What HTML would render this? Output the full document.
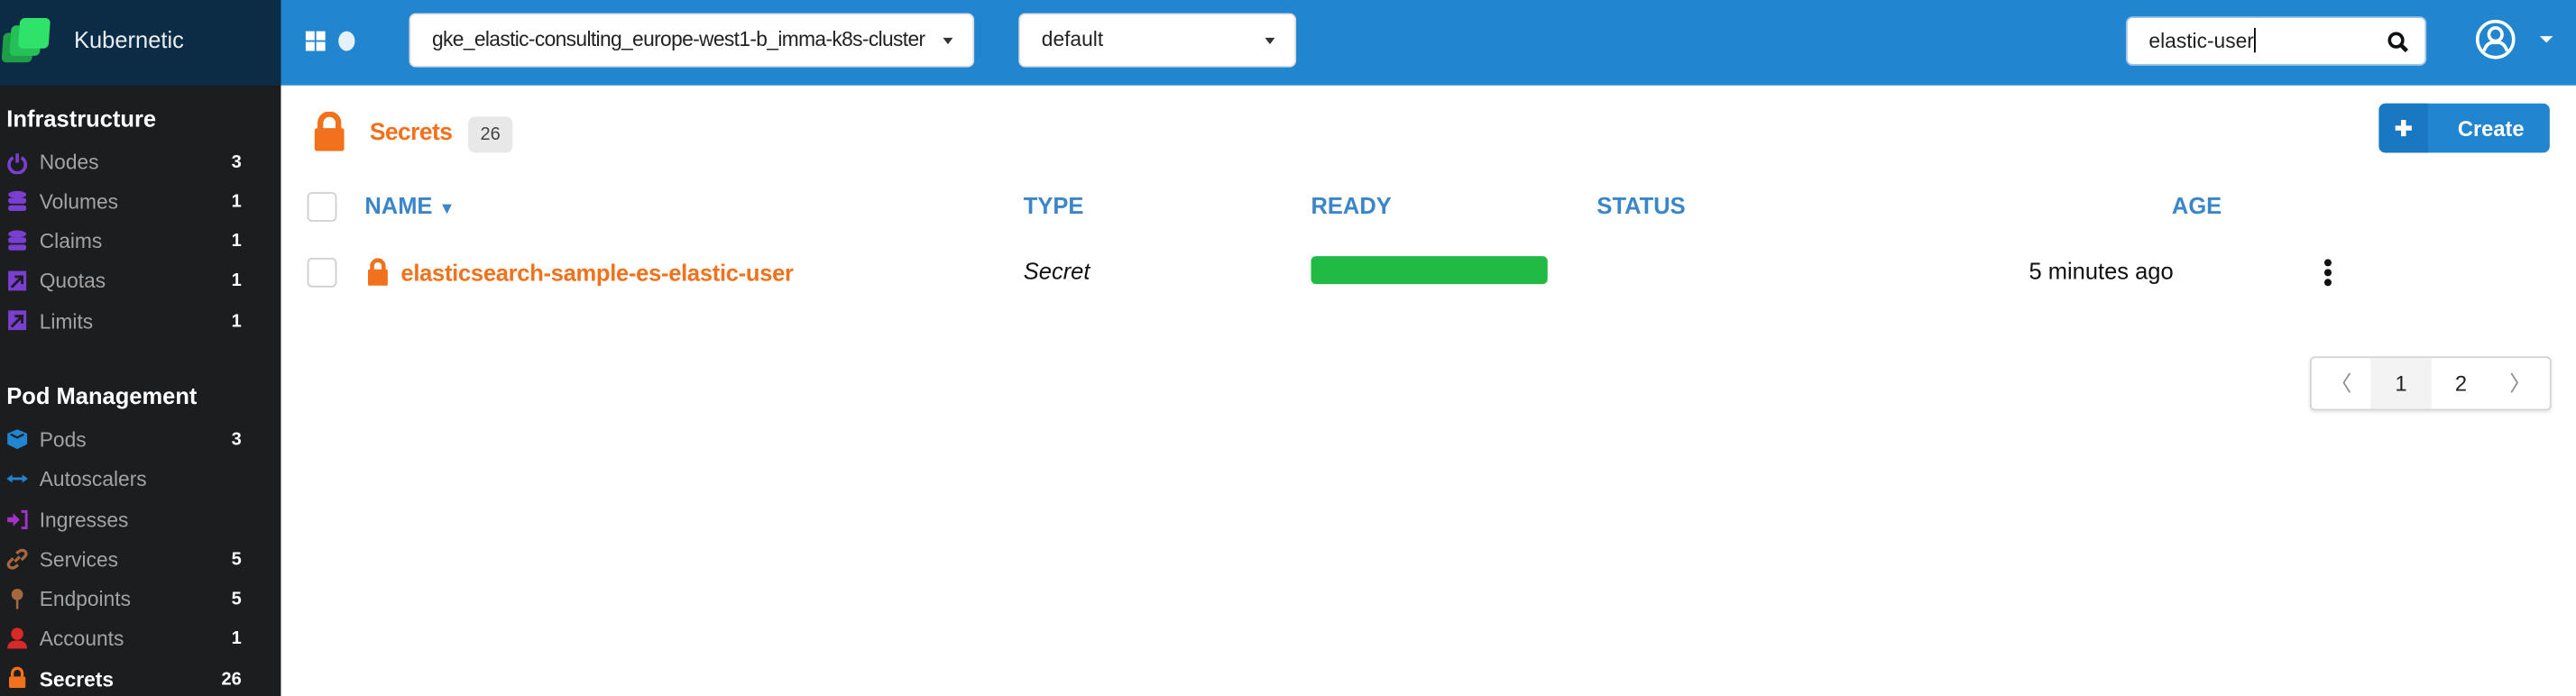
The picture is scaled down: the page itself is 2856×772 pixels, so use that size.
<!DOCTYPE html>
<html><head><meta charset="utf-8"><style>
*{box-sizing:border-box;margin:0;padding:0}
html,body{width:2856px;height:772px;overflow:hidden;background:#fff;font-family:"Liberation Sans",sans-serif}
#w{position:absolute;left:0;top:0;width:1568px;height:424px;transform:scale(1.82143);transform-origin:0 0}
.a{position:absolute}
.sb{left:0;top:0;width:171px;height:424px;background:#1c1d1f}
.logo{left:0;top:0;width:171px;height:52px;background:#0c2c46}
.hdr{left:171px;top:0;width:1397px;height:52px;background:#2185d0}
.sec{color:#fff;font-weight:bold;font-size:14px;left:4px}
.it{left:24px;color:#a3a3a3;font-size:12.5px;line-height:14px}
.ct{left:130px;width:17px;text-align:right;color:#fff;font-size:11px;font-weight:bold;line-height:14px}
.ic{left:4px;width:13px;height:13px}
.dd{background:#fff;border-radius:4px;border:1px solid #ddd;font-size:12.5px;color:#222;line-height:31px;padding-left:13px;white-space:nowrap}
.car{position:absolute;right:12px;top:14px;border-left:3.5px solid transparent;border-right:3.5px solid transparent;border-top:4px solid #333}
.th{top:116px;color:#3b86c9;font-size:14px;font-weight:bold;line-height:18px}
.cb{width:18px;height:18px;border:1px solid #cfcfcf;border-radius:3px;left:187px}
</style></head><body><div id="w">
<div class="a sb"></div>
<div class="a logo"></div>
<svg class="a" style="left:0;top:0" width="40" height="52">
<rect x="3.5" y="20" width="18.5" height="18" rx="3" fill="#1e9e46" transform="skewX(-4)"/>
<rect x="8" y="15.5" width="18.5" height="18.5" rx="3" fill="#25c158" transform="skewX(-4)"/>
<rect x="13" y="11" width="18.5" height="18.5" rx="3" fill="#2fe26a" transform="skewX(-4)"/>
</svg>
<div class="a" style="left:45px;top:16px;color:#e8eef4;font-size:14px">Kubernetic</div>
<div class="a hdr"></div>
<svg class="a" style="left:186px;top:18px" width="32" height="14"><rect x="0" y="1" width="5.5" height="5.5" fill="#fff"/><rect x="6.5" y="1" width="5.5" height="5.5" fill="#fff"/><rect x="0" y="7.5" width="5.5" height="5.5" fill="#fff"/><rect x="6.5" y="7.5" width="5.5" height="5.5" fill="#fff"/><ellipse cx="25" cy="7" rx="5" ry="6" fill="#e6f0fa"/></svg>
<div class="a dd" style="left:249px;top:8px;width:344px;height:33px;letter-spacing:-0.35px">gke_elastic-consulting_europe-west1-b_imma-k8s-cluster<span class="car"></span></div>
<div class="a dd" style="left:620px;top:8px;width:169px;height:33px">default<span class="car"></span></div>
<div class="a dd" style="left:1294px;top:10px;width:183px;height:30px;line-height:28px;border-color:#9cc4e6">elastic-user<span style="display:inline-block;width:1px;height:15px;background:#000;vertical-align:-3px"></span>
<svg class="a" style="right:10px;top:8px" width="13" height="13"><circle cx="5.5" cy="5.5" r="4" stroke="#111" stroke-width="2" fill="none"/><path d="M8.5 8.5 L12 12" stroke="#111" stroke-width="2.5"/></svg></div>
<svg class="a" style="left:1506px;top:11px" width="26" height="26"><circle cx="13" cy="13" r="11" stroke="#fff" stroke-width="2" fill="none"/><circle cx="13" cy="10" r="4" stroke="#fff" stroke-width="2" fill="none"/><path d="M6 20 Q8 14 13 15 Q18 14 20 20" stroke="#fff" stroke-width="2" fill="none"/></svg>
<div class="a" style="left:1546px;top:22px;border-left:4px solid transparent;border-right:4px solid transparent;border-top:4px solid #fff"></div>

<div class="a sec" style="top:64px">Infrastructure</div>
<svg class="a ic" style="top:93px" viewBox="0 0 13 13"><path d="M4 3 A5 5 0 1 0 9 3" stroke="#7a3fd0" stroke-width="2" fill="none"/><path d="M6.5 0.5 V6" stroke="#7a3fd0" stroke-width="2"/></svg>
<div class="a it" style="top:92px">Nodes</div><div class="a ct" style="top:92px">3</div>
<svg class="a ic" style="top:116px" viewBox="0 0 13 13"><ellipse cx="6.5" cy="2.5" rx="5.5" ry="2.2" fill="#7a3fd0"/><rect x="1" y="4.5" width="11" height="3.5" rx="1.5" fill="#7a3fd0"/><rect x="1" y="9" width="11" height="3.5" rx="1.5" fill="#7a3fd0"/></svg>
<div class="a it" style="top:116px">Volumes</div><div class="a ct" style="top:116px">1</div>
<svg class="a ic" style="top:140px" viewBox="0 0 13 13"><ellipse cx="6.5" cy="2.5" rx="5.5" ry="2.2" fill="#7a3fd0"/><rect x="1" y="4.5" width="11" height="3.5" rx="1.5" fill="#7a3fd0"/><rect x="1" y="9" width="11" height="3.5" rx="1.5" fill="#7a3fd0"/></svg>
<div class="a it" style="top:140px">Claims</div><div class="a ct" style="top:140px">1</div>
<svg class="a ic" style="top:165px" viewBox="0 0 13 13"><rect x="1" y="0" width="11" height="12" fill="#7a3fd0"/><path d="M3 10 L9 4 M5 3.5 H9.5 V8" stroke="#1c1d1f" stroke-width="1.6" fill="none"/></svg>
<div class="a it" style="top:164px">Quotas</div><div class="a ct" style="top:164px">1</div>
<svg class="a ic" style="top:189px" viewBox="0 0 13 13"><rect x="1" y="0" width="11" height="12" fill="#7a3fd0"/><path d="M3 10 L9 4 M5 3.5 H9.5 V8" stroke="#1c1d1f" stroke-width="1.6" fill="none"/></svg>
<div class="a it" style="top:189px">Limits</div><div class="a ct" style="top:189px">1</div>

<div class="a sec" style="top:233px">Pod Management</div>
<svg class="a ic" style="top:261px" viewBox="0 0 13 13"><path d="M6.5 0.5 L12.5 3 V9.5 L6.5 12.5 L0.5 9.5 V3Z" fill="#2185d0"/><path d="M2.5 3.5 L6.5 5.5 L10.5 3.5" stroke="#1c1d1f" stroke-width="1.2" fill="none"/></svg>
<div class="a it" style="top:261px">Pods</div><div class="a ct" style="top:261px">3</div>
<svg class="a ic" style="top:285px" viewBox="0 0 13 13"><path d="M2 6.5 H11" stroke="#2185d0" stroke-width="1.6"/><path d="M0 6.5 L3.5 4 V9Z M13 6.5 L9.5 4 V9Z" fill="#2185d0"/></svg>
<div class="a it" style="top:285px">Autoscalers</div>
<svg class="a ic" style="top:310px" viewBox="0 0 13 13"><path d="M0.5 5 H4 V2.5 L8 6.5 L4 10.5 V8 H0.5Z" fill="#a333c8"/><path d="M9 1.5 H12 V11.5 H9" stroke="#a333c8" stroke-width="1.6" fill="none"/></svg>
<div class="a it" style="top:310px">Ingresses</div>
<svg class="a ic" style="top:334px" viewBox="0 0 13 13"><path d="M5 8 L8 5 M6 3 L8 1.5 Q10 0.5 11.5 2 Q12.5 3.5 11 5 L9 7 M7 10 L5 11.5 Q3 12.5 1.5 11 Q0.5 9.5 2 8 L4 6" stroke="#a5673f" stroke-width="1.8" fill="none"/></svg>
<div class="a it" style="top:334px">Services</div><div class="a ct" style="top:334px">5</div>
<svg class="a ic" style="top:358px" viewBox="0 0 13 13"><circle cx="6.5" cy="4" r="3.5" fill="#a5673f"/><rect x="5.8" y="7" width="1.4" height="6" fill="#a5673f"/></svg>
<div class="a it" style="top:358px">Endpoints</div><div class="a ct" style="top:358px">5</div>
<svg class="a ic" style="top:382px" viewBox="0 0 13 13"><circle cx="6.5" cy="4" r="3.7" fill="#db2828"/><path d="M0.5 13 Q0.5 8 6.5 8 Q12.5 8 12.5 13Z" fill="#db2828"/></svg>
<div class="a it" style="top:382px">Accounts</div><div class="a ct" style="top:382px">1</div>
<svg class="a ic" style="top:406px" viewBox="0 0 13 13"><path d="M3.5 6 V4 A3 3 0 0 1 9.5 4 V6" stroke="#f2711c" stroke-width="1.8" fill="none"/><rect x="1.5" y="6" width="10" height="7" rx="1" fill="#f2711c"/></svg>
<div class="a it" style="top:407px;color:#fff;font-weight:bold">Secrets</div><div class="a ct" style="top:407px">26</div>

<svg class="a" style="left:190px;top:68px" width="21" height="24" viewBox="0 0 21 24"><path d="M5 11 V7 A5.5 5.5 0 0 1 16 7 V11" stroke="#f2711c" stroke-width="3.5" fill="none"/><rect x="1.5" y="10" width="18" height="14" rx="1.5" fill="#f2711c"/></svg>
<div class="a" style="left:225px;top:73px;color:#f2711c;font-size:14.5px;font-weight:bold;letter-spacing:-0.3px">Secrets</div>
<div class="a" style="left:285px;top:71px;width:27px;height:22px;background:#e8e8e8;border-radius:4px;font-size:11px;color:#444;text-align:center;line-height:22px">26</div>
<div class="a" style="left:1448px;top:63px;width:104px;height:30px;background:#2185d0;border-radius:4px"><div class="a" style="left:0;top:0;width:30px;height:30px;background:#1a78c2;border-radius:4px 0 0 4px">
<svg class="a" style="left:9px;top:9px" width="12" height="12"><path d="M6 1 V11 M1 6 H11" stroke="#fff" stroke-width="3"/></svg></div><div class="a" style="left:48px;top:8px;color:#fff;font-size:13px;font-weight:bold">Create</div></div>

<div class="a cb" style="top:117px"></div>
<div class="a th" style="left:222px">NAME <span style="font-size:10px">▼</span></div>
<div class="a th" style="left:623px">TYPE</div>
<div class="a th" style="left:798px">READY</div>
<div class="a th" style="left:972px">STATUS</div>
<div class="a th" style="left:1322px">AGE</div>

<div class="a cb" style="top:157px"></div>
<svg class="a" style="left:223px;top:157px" width="14" height="17" viewBox="0 0 14 17"><path d="M3.5 8 V5 A3.5 3.5 0 0 1 10.5 5 V8" stroke="#f2711c" stroke-width="2.5" fill="none"/><rect x="1" y="7" width="12" height="10" rx="1" fill="#f2711c"/></svg>
<div class="a" style="left:244px;top:158px;color:#f2711c;font-size:14px;font-weight:bold;letter-spacing:-0.15px">elasticsearch-sample-es-elastic-user</div>
<div class="a" style="left:623px;top:157px;color:#111;font-size:14px;font-style:italic">Secret</div>
<div class="a" style="left:798px;top:156px;width:144px;height:17px;background:#21ba45;border-radius:3px"></div>
<div class="a" style="left:1235px;top:157px;color:#111;font-size:14px">5 minutes ago</div>
<svg class="a" style="left:1413px;top:157px" width="8" height="18"><circle cx="4" cy="3" r="2.2" fill="#111"/><circle cx="4" cy="9" r="2.2" fill="#111"/><circle cx="4" cy="15" r="2.2" fill="#111"/></svg>

<div class="a" style="left:1406px;top:217px;width:147px;height:33px;border:1px solid #d4d4d6;border-radius:3px;box-shadow:0 1px 2px rgba(0,0,0,.1);font-size:13px;color:#222">
<div class="a" style="left:0;top:0;width:36px;height:31px;text-align:center;line-height:31px;color:#888">〈</div>
<div class="a" style="left:36px;top:0;width:37px;height:31px;background:#f3f3f3;text-align:center;line-height:31px">1</div>
<div class="a" style="left:73px;top:0;width:36px;height:31px;text-align:center;line-height:31px">2</div>
<div class="a" style="left:109px;top:0;width:36px;height:31px;text-align:center;line-height:31px;color:#888">〉</div>
</div>
</div></body></html>
